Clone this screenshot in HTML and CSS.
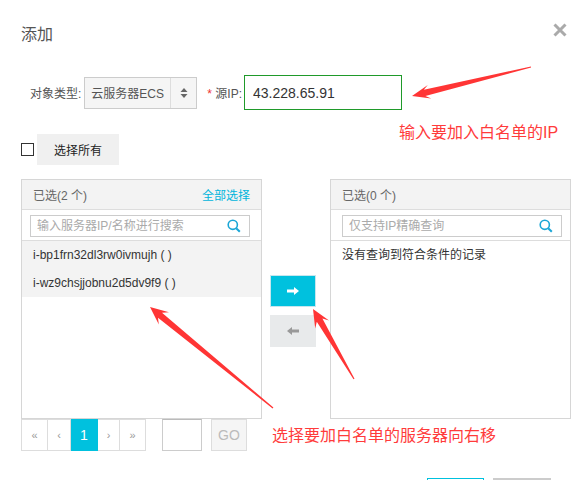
FILE: index.html
```html
<!DOCTYPE html>
<html lang="zh-CN">
<head>
  <meta charset="UTF-8">
  <meta name="viewport" content="width=device-width, initial-scale=1.0">
  <title>添加</title>
  <link rel="stylesheet" href="styles.css">
</head>
<body>

<div class="dialog">
  <div class="dlg-head">
    <h3 class="dlg-title">添加</h3>
    <span class="dlg-close">
      <svg width="14" height="14" viewBox="0 0 14 14"><path d="M1.5 1.5l11 11M12.5 1.5l-11 11" stroke="#aaa" stroke-width="3"/></svg>
    </span>
  </div>

  <!-- tipo + ip de origem -->
  <div class="form-row">
    <label class="form-label">对象类型:</label>
    <div class="select">
      <span class="select-text">云服务器ECS</span>
      <span class="select-caret">
        <svg width="8" height="12" viewBox="0 0 8 12"><path d="M4 1l3.5 4h-7z M0.5 7h7L4 11z" fill="#666"/></svg>
      </span>
    </div>
    <label class="form-label ip-label"><span class="req">*</span> 源IP:</label>
    <input class="ip-input" type="text" value="43.228.65.91">
  </div>

  <div class="select-all">
    <span class="checkbox"></span>
    <button class="btn-gray">选择所有</button>
  </div>

  <div class="transfer">
    <div class="panel panel-left">
      <div class="panel-head">
        <span>已选(2 个)</span>
        <a class="link">全部选择</a>
      </div>
      <div class="panel-search">
        <div class="search">
          <input type="text" placeholder="输入服务器IP/名称进行搜索">
          <svg width="14" height="14" viewBox="0 0 14 14"><circle cx="5.8" cy="5.8" r="4.6" fill="none" stroke="#1aa6d6" stroke-width="1.6"/><path d="M9.2 9.2l3.6 3.6" stroke="#1aa6d6" stroke-width="2"/></svg>
        </div>
      </div>
      <ul class="panel-list">
        <li class="item">i-bp1frn32dl3rw0ivmujh ( )</li>
        <li class="item">i-wz9chsjjobnu2d5dv9f9 ( )</li>
      </ul>
    </div>

    <div class="transfer-ops">
      <button class="op op-right">
        <svg width="12" height="8" viewBox="0 0 12 8"><path d="M0 2.6h7V0l5 4-5 4V5.4H0z" fill="#fff"/></svg>
      </button>
      <button class="op op-left">
        <svg width="12" height="8" viewBox="0 0 12 8"><path d="M12 2.6H5V0L0 4l5 4V5.4h7z" fill="#999"/></svg>
      </button>
    </div>

    <div class="panel panel-right">
      <div class="panel-head">
        <span>已选(0 个)</span>
      </div>
      <div class="panel-search">
        <div class="search">
          <input type="text" placeholder="仅支持IP精确查询">
          <svg width="14" height="14" viewBox="0 0 14 14"><circle cx="5.8" cy="5.8" r="4.6" fill="none" stroke="#1aa6d6" stroke-width="1.6"/><path d="M9.2 9.2l3.6 3.6" stroke="#1aa6d6" stroke-width="2"/></svg>
        </div>
      </div>
      <ul class="panel-list">
        <li class="empty">没有查询到符合条件的记录</li>
      </ul>
    </div>
  </div>

  <div class="pager">
    <span class="pg pg-first">«</span>
    <span class="pg pg-prev">‹</span>
    <span class="pg pg-cur">1</span>
    <span class="pg pg-next">›</span>
    <span class="pg pg-last">»</span>
    <input class="pg-input" type="text">
    <button class="pg-go">GO</button>
  </div>

  <!-- botões do rodapé (só o topo aparece) -->
  <div class="dlg-foot">
    <button class="btn-ok" aria-label="确定"></button>
    <button class="btn-cancel" aria-label="取消"></button>
  </div>

  <!-- anotações em vermelho -->
  <div class="tip tip-ip">输入要加入白名单的IP</div>
  <div class="tip tip-move">选择要加白名单的服务器向右移</div>
  <svg class="marks" width="588" height="480" viewBox="0 0 588 480">
    <polygon points="530.9,66.4 423.8,89.8 427.8,85 412,96 431.2,98.5 425.4,96 531.1,67.6"/>
    <polygon points="273.4,407.5 162,312.7 169,312.2 150,307 158.8,324.6 158,317.7 272.6,408.5"/>
    <polygon points="354.5,378.7 322.4,318.6 329,320.5 313,309 315.2,328.6 316.8,321.8 353.5,379.3"/>
  </svg>
</div>

</body>
</html>
```

FILE: styles.css
```css
body {
  margin: 0;
  font-family: "Liberation Sans", "Noto Sans CJK SC", sans-serif;
  font-size: 12px;
  color: #333;
}
button, input {
  font-family: inherit;
  font-size: 12px;
  box-sizing: border-box;
}
ul {
  margin: 0;
  padding: 0;
  list-style: none;
}

.dialog {
  position: relative;
  width: 588px;
  height: 480px;
  padding: 0 17px 0 21px;
  box-sizing: border-box;
  overflow: hidden;
}
.dlg-head {
  display: flex;
  justify-content: space-between;
  align-items: center;
  height: 70px;
  padding-right: 4px;
}
.dlg-title {
  margin: 0;
  font-size: 16px;
  line-height: 22px;
  font-weight: normal;
  color: #555;
}
.dlg-close {
  align-self: flex-start;
  margin-top: 23px;
  width: 14px;
  height: 14px;
  display: flex;
}

/* linha do formulário */
.form-row {
  display: flex;
  align-items: center;
  height: 35px;
  margin-top: 5px;
  padding-left: 9px;
}
.form-label {
  color: #555;
  white-space: nowrap;
}
.select {
  display: flex;
  width: 113px;
  height: 32px;
  margin-left: 3px;
  border: 1px solid #ccc;
  background: #f5f5f5;
  box-sizing: border-box;
}
.select-text {
  flex: 1;
  display: flex;
  align-items: center;
  padding-left: 6px;
  border-right: 1px solid #ddd;
  color: #555;
}
.select-caret {
  width: 25px;
  display: flex;
  align-items: center;
  justify-content: center;
}
.ip-label {
  margin-left: 10px;
}
.req {
  color: #e33;
}
.ip-input {
  width: 158px;
  height: 35px;
  margin-left: 2px;
  padding: 0 8px;
  border: 1px solid #1f9a2a;
  font-size: 14px;
  color: #333;
  outline: none;
}

.select-all {
  display: flex;
  align-items: center;
  margin-top: 24px;
  height: 31px;
}
.checkbox {
  width: 13px;
  height: 13px;
  border: 1px solid #333;
  box-sizing: border-box;
}
.btn-gray {
  width: 82px;
  height: 31px;
  margin-left: 3px;
  border: 0;
  background: #f0f0f0;
  color: #222;
}

/* painéis de transferência */
.transfer {
  display: flex;
  margin-top: 14px;
  height: 240px;
}
.panel {
  flex: none;
  width: 241px;
  height: 240px;
  border: 1px solid #d6d6d6;
  box-sizing: border-box;
}
.panel-head {
  display: flex;
  justify-content: space-between;
  align-items: center;
  height: 29px;
  padding: 0 11px 0 11px;
  background: #f3f3f3;
  border-bottom: 1px solid #ddd;
  color: #666;
}
.link {
  color: #00b5dc;
}
.panel-search {
  border-bottom: 1px solid #ddd;
  padding: 5px 0 0 8px;
  height: 25px;
}
.panel-right .panel-search {
  padding-left: 11px;
}
.search {
  display: flex;
  align-items: center;
  width: 220px;
  height: 22px;
  border: 1px solid #ccc;
  box-sizing: border-box;
  padding: 0 8px 0 6px;
}
.search input {
  flex: 1;
  min-width: 0;
  border: 0;
  padding: 0;
  outline: none;
  color: #333;
}
.search input::placeholder {
  color: #aaa;
}
.item, .empty {
  height: 28px;
  line-height: 28px;
  padding: 0 11px;
}
.item {
  background: #f3f3f3;
}

.transfer-ops {
  flex: none;
  width: 68px;
  padding: 96px 0 0 8px;
  box-sizing: border-box;
  display: flex;
  flex-direction: column;
  gap: 8px;
}
.op {
  width: 46px;
  height: 32px;
  display: flex;
  align-items: center;
  justify-content: center;
  padding: 0;
}
.op-right {
  background: #00c1de;
  border: 1px solid #c6e6ee;
}
.op-left {
  background: #e8eaeb;
  border: 0;
}

/* paginação */
.pager {
  display: flex;
  height: 32px;
}
.pg {
  display: flex;
  align-items: center;
  justify-content: center;
  box-sizing: border-box;
  border: 1px solid #ddd;
  border-left: 0;
  color: #999;
  font-size: 11px;
}
.pg-first {
  border-left: 1px solid #ddd;
  width: 27px;
}
.pg-prev { width: 23px; }
.pg-cur {
  width: 27px;
  background: #00c1de;
  border-color: #00c1de;
  color: #fff;
  font-size: 14px;
}
.pg-next { width: 22px; }
.pg-last { width: 26px; }
.pg-input {
  width: 40px;
  height: 32px;
  margin-left: 16px;
  border: 1px solid #ccc;
  border-top-color: #bbb;
}
.pg-go {
  width: 36px;
  height: 32px;
  margin-left: 9px;
  border: 1px solid #ddd;
  background: #f5f5f5;
  color: #bbb;
  font-size: 14px;
}

.dlg-foot {
  display: flex;
  justify-content: flex-end;
  gap: 9px;
  margin-top: 27px;
  padding-right: 20px;
}
.btn-ok, .btn-cancel {
  height: 30px;
  width: 57px;
}
.btn-ok {
  border: 1px solid #00c1de;
  background: #fff;
  color: #00c1de;
}
.btn-cancel {
  width: 58px;
  border: 0;
  background: #ccc;
}

/* anotações */
.tip {
  position: absolute;
  font-size: 16px;
  line-height: 16px;
  color: #ff3b3b;
  white-space: nowrap;
}
.tip-ip {
  left: 399px;
  top: 125px;
}
.tip-move {
  left: 272px;
  top: 428px;
}
.marks {
  position: absolute;
  left: 0;
  top: 0;
  pointer-events: none;
  fill: #ff3535;
}
```
